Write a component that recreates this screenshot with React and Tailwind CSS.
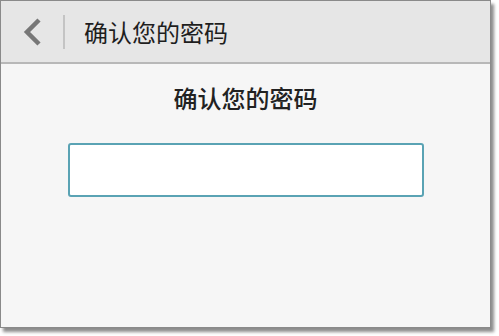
export default function App() {
  return (
    <div className="w-[499px] h-[336px] bg-white overflow-hidden" style={{ fontFamily: '"Noto Sans CJK SC", "Noto Sans", sans-serif' }}>
      <div className="w-[491px] h-[328px] flex flex-col border border-[#8a8a8a] bg-[#f6f6f6] shadow-[3px_4px_3px_rgba(0,0,0,0.45)]">
        {/* Header */}
        <div className="h-[63px] shrink-0 flex items-center bg-[#e6e6e6] border-b-2 border-[#b8b8b8]">
          <div className="w-[62px] flex justify-center">
            <svg width="22" height="30" viewBox="0 0 22 30" fill="none">
              <path d="M18 3 L6 15 L18 27" stroke="#777" strokeWidth="4.5" strokeLinejoin="miter" />
            </svg>
          </div>
          <div className="w-[2px] h-[34px] bg-[#c4c4c4]" />
          <span className="ml-[19px] text-[24px] leading-none text-[#1e1e1e]">确认您的密码</span>
        </div>

        {/* Body */}
        <div className="flex-1 flex flex-col items-center">
          <h1 className="mt-[22px] text-[24px] leading-none font-medium text-[#222]">确认您的密码</h1>
          <div className="mt-[33px] w-[356px] h-[54px] bg-white border-2 border-[#5aa3b4] rounded-[3px]" />
        </div>
      </div>
    </div>
  );
}
